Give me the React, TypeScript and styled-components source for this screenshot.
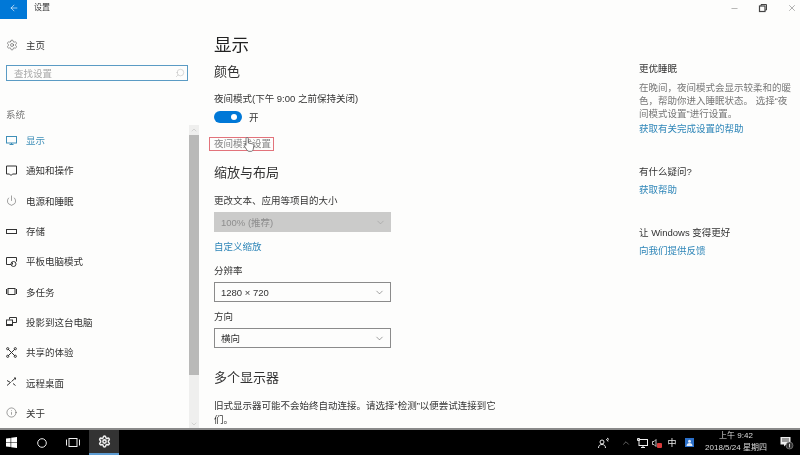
import React from "react";
import styled, { createGlobalStyle } from "styled-components";
import { ArrowLeft, ChevronDown, ChevronUp, Info, Minus, Power, Search, Settings, X } from "lucide-react";

const Global = createGlobalStyle`
  html, body { margin: 0; padding: 0; background: #fdfdfc; }
  body { font-family: "Liberation Sans", "Noto Sans CJK SC", sans-serif; }
  * { box-sizing: border-box; }
`;

const Screen = styled.div`
  width: 800px; height: 455px; display: flex; flex-direction: column; overflow: hidden;
  background: #fdfdfc; color: #222; font-size: 9.5px; filter: blur(0.3px);
`;
const TitleBar = styled.header`
  height: 19px; flex: none; display: flex; align-items: flex-start; color: #333;
`;
const BackButton = styled.div`
  width: 27px; height: 19px; padding-bottom: 3px; background: #0078d7; color: #fff; display: flex; align-items: center; justify-content: center;
`;
const AppTitle = styled.span`
  margin-left: 7px; height: 16px; line-height: 16px; font-size: 8px; flex: 1;
`;
const WindowButtons = styled.div`
  display: flex; align-items: center; gap: 19px; height: 16px; padding-right: 3px; color: #444;
`;
const WinBtn = styled.span`
  width: 10px; height: 10px; display: flex; align-items: center; justify-content: center;
`;
const Body = styled.div`
  flex: 1; min-height: 0; display: flex;
`;
const Sidebar = styled.aside`
  width: 200px; flex: none; position: relative; display: flex; flex-direction: column;
`;
const HomeRow = styled.div`
  height: 14px; margin-top: 19px; padding-left: 6px; display: flex; align-items: center; gap: 8px; color: #333;
`;
const SearchBox = styled.div`
  margin: 13px 12px 0 6px; height: 19px; border: 1.4px solid #5b9bc4; display: flex; align-items: center;
  justify-content: space-between; padding: 0 2px 0 7px; color: #a8a8a8; font-size: 9.5px;
`;
const GroupLabel = styled.div`
  margin: 27px 0 0 6px; height: 14px; line-height: 14px; color: #777;
`;
const NavList = styled.nav`
  margin-top: 3px; display: flex; flex-direction: column; padding-right: 12px;
`;
const NavItem = styled.div<{ $active?: boolean }>`
  height: 30.3px; display: flex; align-items: center; gap: 9px; padding-left: 6px;
  color: ${(p) => (p.$active ? "#3f8fb8" : "#333")}; white-space: nowrap;
`;
const NavIcon = styled.svg`
  width: 11px; height: 11px; flex: none; fill: none; stroke: currentColor; stroke-width: 1; overflow: visible;
`;
const Scrollbar = styled.div`
  position: absolute; right: 1px; top: 106px; bottom: 0; width: 10px; background: #efefee;
  display: flex; flex-direction: column; align-items: center; color: #999;
`;
const Thumb = styled.div`
  width: 10px; height: 240px; margin-top: 1px; background: #b9b9b8;
`;
const ScrollEnd = styled.div`
  height: 9px; display: flex; align-items: center; justify-content: center;
`;
const ScrollSpacer = styled.div`flex: 1;`;
const Content = styled.main`
  width: 425px; flex: none; padding: 0 0 0 14px; overflow: hidden;
`;
const PageTitle = styled.h1`
  margin: 14px 0 0; height: 24px; line-height: 24px; font-size: 17.5px; font-weight: 400; color: #222;
`;
const SectionTitle = styled.h2<{ $top: number }>`
  margin: ${(p) => p.$top}px 0 0; height: 18px; line-height: 18px; font-size: 13px; font-weight: 400; color: #333;
`;
const FieldLabel = styled.div<{ $top: number }>`
  margin-top: ${(p) => p.$top}px; height: 14px; line-height: 14px; color: #333; white-space: nowrap;
`;
const ToggleRow = styled.div`
  margin-top: 5px; height: 12px; display: flex; align-items: center; gap: 7px; color: #333;
`;
const Toggle = styled.span`
  width: 28px; height: 12px; border-radius: 6px; background: #0078d7; display: flex; align-items: center; justify-content: flex-end; padding-right: 5px;
`;
const Knob = styled.span`
  width: 6px; height: 6px; border-radius: 50%; background: #fff;
`;
const LinkBoxWrap = styled.div`
  position: relative; margin: 14px 0 0 -5px; width: 65px; height: 14px; border: 1px solid #e2737b;
  padding-left: 4px; line-height: 12px; color: #858585; white-space: nowrap;
`;
const Cursor = styled.svg`
  position: absolute; left: 33px; top: -2px; width: 13px; height: 17px;
`;
const Select = styled.div<{ $disabled?: boolean; $top: number }>`
  margin-top: ${(p) => p.$top}px; width: 177px; height: 20px; display: flex; align-items: center; justify-content: space-between;
  padding: 0 5px 0 ${(p) => (p.$disabled ? 7 : 6)}px; background: ${(p) => (p.$disabled ? "#cbcbca" : "#fdfdfc")};
  border: ${(p) => (p.$disabled ? "none" : "1.4px solid #8b8b8b")};
  color: ${(p) => (p.$disabled ? "#8e8e8e" : "#333")};
`;
const ContentLink = styled.div<{ $top: number }>`
  margin-top: ${(p) => p.$top}px; height: 14px; line-height: 14px; color: #2f86b8;
`;
const Paragraph = styled.p`
  margin: 12px 0 0; width: 290px; line-height: 14px; color: #333;
`;
const Aside = styled.aside`
  flex: 1; padding-left: 14px; width: 160px;
`;
const AsideTitle = styled.div<{ $top: number }>`
  margin-top: ${(p) => p.$top}px; height: 14px; line-height: 14px; color: #333; white-space: nowrap;
`;
const AsideText = styled.p`
  margin: 5px 0 0; width: 156px; font-size: 9.5px; line-height: 13px; color: #777;
`;
const AsideLink = styled.div<{ $top: number }>`
  margin-top: ${(p) => p.$top}px; height: 14px; line-height: 14px; color: #2f86b8; white-space: nowrap;
`;
const Taskbar = styled.footer`
  height: 27px; flex: none; background: #000; border-top: 2px solid #8a8a8a; display: flex; align-items: center; color: #eee;
`;
const TaskButton = styled.div<{ $w: number; $active?: boolean }>`
  width: ${(p) => p.$w}px; height: 25px; display: flex; align-items: center; justify-content: center;
  background: ${(p) => (p.$active ? "#333" : "transparent")};
  border-bottom: ${(p) => (p.$active ? "2px solid #5c9bd1" : "none")};
`;
const StartButton = styled(TaskButton)`
  padding-right: 3px;
`;
const Tray = styled.div`
  margin-left: auto; display: flex; align-items: center; height: 25px;
`;
const TrayIcon = styled.div<{ $w: number }>`
  width: ${(p) => p.$w}px; display: flex; align-items: center; justify-content: center; font-size: 9px; color: #eee;
`;
const Clock = styled.div`
  width: 76px; margin-top: -1px; text-align: center; font-size: 8px; line-height: 12px; color: #ddd; white-space: nowrap;
`;
const TIcon = styled.svg`
  fill: none; stroke: currentColor; stroke-width: 1; overflow: visible;
`;

const items: { label: string; icon: React.ReactNode; active?: boolean }[] = [
  { label: "显示", active: true, icon: <NavIcon viewBox="0 0 11 11"><rect x="0.5" y="1.5" width="10" height="6.5" /><path d="M3.5 9.5h4M5.5 8v1.5" /></NavIcon> },
  { label: "通知和操作", icon: <NavIcon viewBox="0 0 11 11"><path d="M0.5 1h10v8H6.5L5 10.5 3.5 9h-3z" /></NavIcon> },
  { label: "电源和睡眠", icon: <Power size={11} strokeWidth={1} /> },
  { label: "存储", icon: <NavIcon viewBox="0 0 11 11"><rect x="0.5" y="3.5" width="10" height="4" /></NavIcon> },
  { label: "平板电脑模式", icon: <NavIcon viewBox="0 0 11 11"><path d="M5 8.5H0.5v-7h10v4" /><circle cx="7.5" cy="8" r="2.5" /><path d="M6.5 6.5v2" /></NavIcon> },
  { label: "多任务", icon: <NavIcon viewBox="0 0 11 11"><rect x="2" y="2.5" width="7" height="6" /><path d="M0.5 3v5M10.5 3v5" /></NavIcon> },
  { label: "投影到这台电脑", icon: <NavIcon viewBox="0 0 11 11"><path d="M3.5 3.5V1.5h7v5H7" /><rect x="0.5" y="4" width="6" height="4.5" /><path d="M0 9.500h7" /></NavIcon> },
  { label: "共享的体验", icon: <NavIcon viewBox="0 0 11 11"><path d="M2 2l7 7M9 2l-7 7" /><circle cx="1.7" cy="1.7" r="1.1" /><circle cx="9.3" cy="1.7" r="1.1" /><circle cx="1.7" cy="9.3" r="1.1" /><circle cx="9.3" cy="9.3" r="1.1" /></NavIcon> },
  { label: "远程桌面", icon: <NavIcon viewBox="0 0 11 11"><path d="M1 3.500L4.500 5.500L1 8.500M9.500 1L5.500 4.500M7 6.500L9.500 8.500M8 1h1.500v1.500" /></NavIcon> },
  { label: "关于", icon: <Info size={11} strokeWidth={1} /> },
];

export default function App() {
  return (
    <Screen>
      <Global />
      <TitleBar>
        <BackButton><ArrowLeft size={10} strokeWidth={1.5} /></BackButton>
        <AppTitle>设置</AppTitle>
        <WindowButtons>
          <WinBtn><Minus size={9} strokeWidth={1} /></WinBtn>
          <WinBtn>
            <TIcon width="8" height="8" viewBox="0 0 8 8"><rect x="0.5" y="2" width="5.5" height="5.5" strokeWidth="1.2" /><path d="M2 2V0.5h5.5V6H6" /></TIcon>
          </WinBtn>
          <WinBtn><X size={10} strokeWidth={1} /></WinBtn>
        </WindowButtons>
      </TitleBar>
      <Body>
        <Sidebar>
          <HomeRow><Settings size={12} strokeWidth={1} />主页</HomeRow>
          <SearchBox>查找设置<Search size={10} strokeWidth={1} style={{ transform: "scaleX(-1)" }} /></SearchBox>
          <GroupLabel>系统</GroupLabel>
          <NavList>
            {items.map((it) => (
              <NavItem key={it.label} $active={it.active}>{it.icon}{it.label}</NavItem>
            ))}
          </NavList>
          <Scrollbar>
            <ScrollEnd><ChevronUp size={8} strokeWidth={1} /></ScrollEnd>
            <Thumb />
            <ScrollSpacer />
            <ScrollEnd><ChevronDown size={8} strokeWidth={1} /></ScrollEnd>
          </Scrollbar>
        </Sidebar>
        <Content>
          <PageTitle>显示</PageTitle>
          <SectionTitle $top={6}>颜色</SectionTitle>
          <FieldLabel $top={11}>夜间模式(下午 9:00 之前保持关闭)</FieldLabel>
          <ToggleRow><Toggle><Knob /></Toggle>开</ToggleRow>
          <LinkBoxWrap>
            夜间模式设置
            <Cursor viewBox="0 0 13 17">
              <path d="M4 1.500c1 0 1.300.6 1.300 1.500v4l4 .8c1.300.3 1.700 1 1.500 2.200l-.6 3.500c-.2 1-1 1.800-2 1.800H6c-1 0-1.600-.5-2.200-1.400L1.200 9.800c-.4-.7.4-1.500 1.200-1L3 9.400V3c0-1 .2-1.500 1-1.500z" fill="#fff" stroke="#555" strokeWidth="0.8" />
            </Cursor>
          </LinkBoxWrap>
          <SectionTitle $top={13}>缩放与布局</SectionTitle>
          <FieldLabel $top={12}>更改文本、应用等项目的大小</FieldLabel>
          <Select $disabled $top={4}>100% (推荐)<ChevronDown size={11} strokeWidth={1} /></Select>
          <ContentLink $top={8}>自定义缩放</ContentLink>
          <FieldLabel $top={10}>分辨率</FieldLabel>
          <Select $top={4}>1280 × 720<ChevronDown size={11} strokeWidth={1} /></Select>
          <FieldLabel $top={8}>方向</FieldLabel>
          <Select $top={4}>横向<ChevronDown size={11} strokeWidth={1} /></Select>
          <SectionTitle $top={21}>多个显示器</SectionTitle>
          <Paragraph>旧式显示器可能不会始终自动连接。请选择“检测”以便尝试连接到它们。</Paragraph>
        </Content>
        <Aside>
          <AsideTitle $top={43}>更优睡眠</AsideTitle>
          <AsideText>在晚间，夜间模式会显示较柔和的暖色，帮助你进入睡眠状态。 选择“夜间模式设置”进行设置。</AsideText>
          <AsideLink $top={2}>获取有关完成设置的帮助</AsideLink>
          <AsideTitle $top={29}>有什么疑问?</AsideTitle>
          <AsideLink $top={4}>获取帮助</AsideLink>
          <AsideTitle $top={29}>让 Windows 变得更好</AsideTitle>
          <AsideLink $top={4}>向我们提供反馈</AsideLink>
        </Aside>
      </Body>
      <Taskbar>
        <StartButton $w={26}>
          <svg width="11" height="11" viewBox="0 0 11 11" fill="#fff"><path d="M0 1.600l4.600-.7v4.300H0zM5.200.8L11 0v5.200H5.200zM0 5.800h4.600v4.300L0 9.400zM5.200 5.800H11V11l-5.800-.8z" /></svg>
        </StartButton>
        <TaskButton $w={31}>
          <TIcon width="10" height="10" viewBox="0 0 10 10" strokeWidth="1.3"><circle cx="5" cy="5" r="4.300" /></TIcon>
        </TaskButton>
        <TaskButton $w={32}>
          <TIcon width="14" height="9" viewBox="0 0 14 9"><rect x="3" y="0.5" width="8" height="8" /><path d="M0.5 1.500v6M13.500 1.500v6" /></TIcon>
        </TaskButton>
        <TaskButton $w={30} $active><Settings size={13} strokeWidth={2.8} /></TaskButton>
        <Tray>
          <TrayIcon $w={28}>
            <TIcon width="12" height="10" viewBox="0 0 12 10"><circle cx="4" cy="4" r="2" /><path d="M0.5 10c0-2.500 1.500-3.500 3.500-3.500S7.500 7.500 7.500 10M8 1.500a2 2 0 0 1 2 2M9 0l2 1.500" /></TIcon>
          </TrayIcon>
          <TrayIcon $w={16}><ChevronUp size={10} strokeWidth={1} /></TrayIcon>
          <TrayIcon $w={16}>
            <TIcon width="11" height="10" viewBox="0 0 11 10"><rect x="2" y="1.500" width="8.500" height="6" /><path d="M0.5 0.500h2v2h-2zM6 7.500V10M4 9.500h4" /></TIcon>
          </TrayIcon>
          <TrayIcon $w={14}>
            <svg width="11" height="10" viewBox="0 0 11 10"><path d="M0.500 3.500h1.500L4 1.500v7L2 6.500H0.500z" fill="none" stroke="#eee" strokeWidth="0.8" /><rect x="5" y="5" width="5" height="5" rx="1" fill="#d83b3b" /></svg>
          </TrayIcon>
          <TrayIcon $w={16}>中</TrayIcon>
          <TrayIcon $w={18}>
            <svg width="9" height="9" viewBox="0 0 9 9"><rect width="9" height="9" fill="#2a6fc9" /><circle cx="4.500" cy="3.200" r="1.500" fill="#dfe9f7" /><path d="M1.500 8c0-2 1.300-3 3-3s3 1 3 3z" fill="#dfe9f7" /></svg>
          </TrayIcon>
          <Clock>上午 9:42<br />2018/5/24 星期四</Clock>
          <TrayIcon $w={26}>
            <svg width="14" height="14" viewBox="0 0 14 14"><path d="M0.500 1h10v7.500H6L4 10.500V8.500H0.500z" fill="#eee" /><path d="M2 3h7M2 5h7" stroke="#000" strokeWidth="0.7" /><circle cx="9.500" cy="9.500" r="3.500" fill="#333" stroke="#aaa" strokeWidth="0.5" /><path d="M9.500 7.800v3.600" stroke="#fff" strokeWidth="0.8" /></svg>
          </TrayIcon>
        </Tray>
      </Taskbar>
    </Screen>
  );
}
